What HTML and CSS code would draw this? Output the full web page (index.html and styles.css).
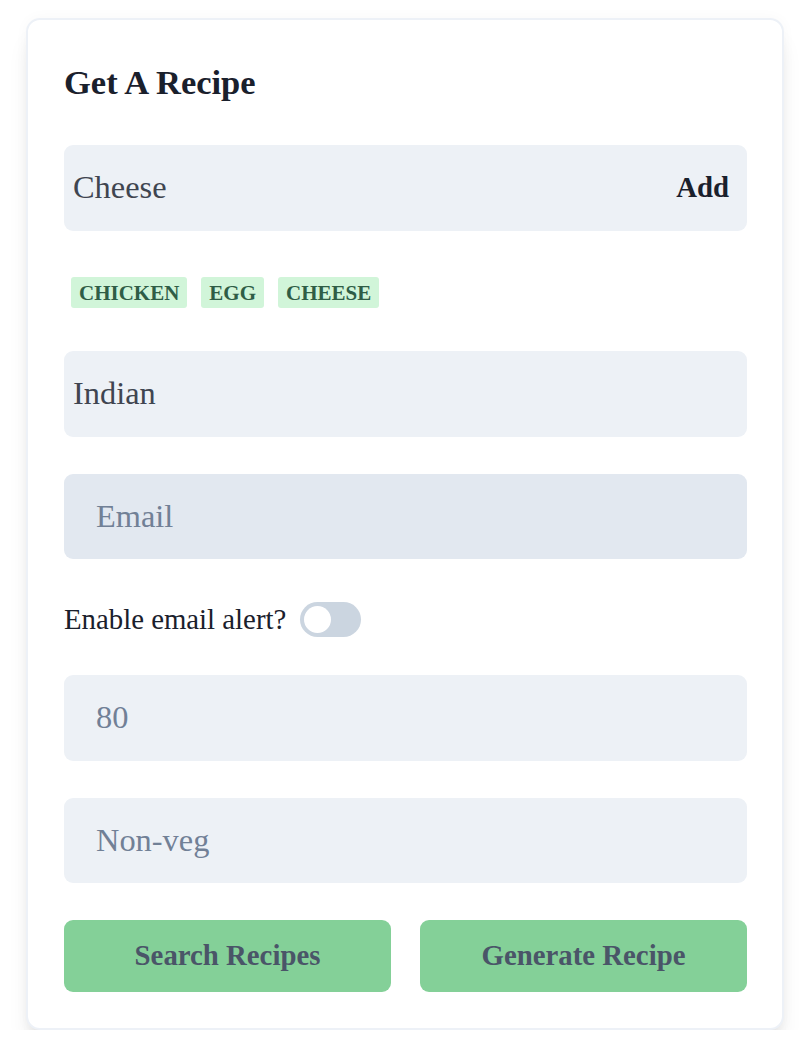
FILE: index.html
```html
<!DOCTYPE html>
<html>
<head>
<meta charset="utf-8">
<link rel="stylesheet" href="styles.css">
</head>
<body>
<div class="card">
  <h1 class="title">Get A Recipe</h1>
  <div class="field field-plain field-add">
    <span class="value">Cheese</span>
    <span class="add">Add</span>
  </div>
  <div class="tags">
    <span class="tag">Chicken</span>
    <span class="tag">Egg</span>
    <span class="tag">Cheese</span>
  </div>
  <div class="field field-plain"><span class="value">Indian</span></div>
  <div class="field field-pad field-dark"><span class="placeholder">Email</span></div>
  <div class="toggle-row">
    <span class="toggle-label">Enable email alert?</span>
    <span class="toggle"><span class="knob"></span></span>
  </div>
  <div class="field field-pad"><span class="placeholder">80</span></div>
  <div class="field field-pad"><span class="placeholder">Non-veg</span></div>
  <div class="buttons">
    <button class="btn">Search Recipes</button>
    <button class="btn">Generate Recipe</button>
  </div>
</div>
</body>
</html>
```

FILE: styles.css
```css
html, body {
  margin: 0;
  padding: 0;
  background: #ffffff;
}
body {
  font-family: "Liberation Serif", "Times New Roman", serif;
  padding: 18px 0 0 26px;
}
.card {
  box-sizing: border-box;
  width: 758px;
  height: 1012px;
  border: 2px solid #edf1f7;
  border-radius: 14px;
  background: #ffffff;
  padding: 43px 35px 36px 36px;
  box-shadow: 0 20px 25px -5px rgba(0, 0, 0, 0.09), 0 10px 12px -5px rgba(0, 0, 0, 0.05), 0 0 14px rgba(0, 0, 0, 0.03);
}
.title {
  margin: 0 0 43px;
  font-size: 34.5px;
  line-height: 39px;
  font-weight: bold;
  color: #1a202c;
}
.field {
  box-sizing: border-box;
  height: 85.5px;
  border-radius: 9px;
  background: #edf1f6;
  display: flex;
  align-items: center;
  font-size: 32.4px;
  margin-bottom: 37px;
}
.field-plain {
  padding: 0 18px 0 9px;
}
.field-pad {
  padding: 0 32px;
}
.field-dark {
  background: #e2e8f0;
}
.field-add {
  justify-content: space-between;
  margin-bottom: 46px;
}
.value {
  color: #3f4550;
}
.placeholder {
  color: #718096;
}
.add {
  font-size: 28.8px;
  font-weight: bold;
  color: #1a202c;
}
.tags {
  display: flex;
  height: 31.5px;
  margin-bottom: 43px;
}
.tag {
  margin: 0 7px;
  padding: 0 8px;
  height: 31.5px;
  line-height: 32px;
  border-radius: 3px;
  background: #d1f5d9;
  color: #2f5d46;
  font-size: 21px;
  font-weight: bold;
  text-transform: uppercase;
}
.toggle-row {
  display: flex;
  align-items: center;
  gap: 14px;
  height: 35px;
  margin: 43px 0 38px;
}
.toggle-label {
  font-size: 28.8px;
  color: #1a202c;
}
.toggle {
  box-sizing: border-box;
  width: 61px;
  height: 35px;
  border-radius: 18px;
  background: #cbd5e0;
  padding: 4px;
  display: flex;
  align-items: center;
}
.knob {
  width: 27px;
  height: 27px;
  border-radius: 50%;
  background: #ffffff;
}
.buttons {
  display: grid;
  grid-template-columns: 1fr 1fr;
  gap: 29px;
}
.btn {
  height: 71.5px;
  border: none;
  border-radius: 9px;
  background: #84d098;
  color: #4a5568;
  font-family: "Liberation Serif", "Times New Roman", serif;
  font-size: 28.8px;
  font-weight: bold;
  padding: 0;
}
```
